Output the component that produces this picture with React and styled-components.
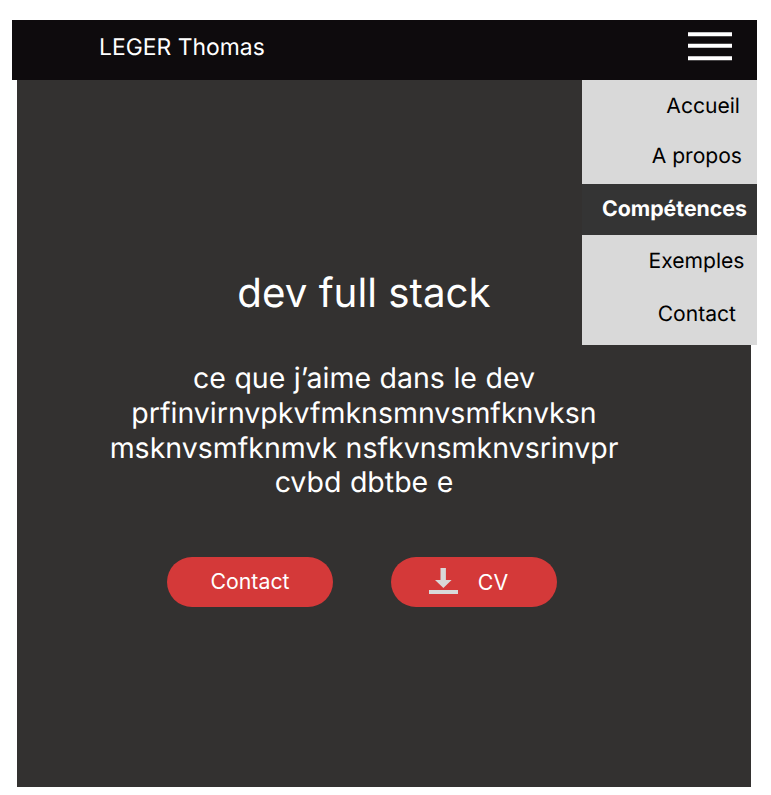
import React from "react";
import styled, { createGlobalStyle } from "styled-components";

const Global = createGlobalStyle`
  * { box-sizing: border-box; }
  body { margin: 0; background: #fff; font-family: Inter, sans-serif; overflow: hidden; text-rendering: geometricPrecision; }
`;
const Page = styled.div`
  position: relative;
  width: 771px;
  height: 795px;
  padding: 20px 14px 8px 12px;
`;
const Header = styled.header`
  display: flex;
  align-items: flex-start;
  justify-content: space-between;
  height: 60px;
  padding: 12px 25px 0 87px;
  background: #0e0b0d;
  color: #fff;
`;
const Brand = styled.div`
  font-size: 22.9px;
  line-height: 28px;
  white-space: nowrap;
  margin-top: 1px;
`;
const MenuIcon = styled.svg`
  display: block;
  width: 44px;
  height: 29px;
`;
const MenuButton = styled.button`
  padding: 0;
  border: 0;
  background: none;
`;
const Hero = styled.main`
  display: flex;
  flex-direction: column;
  align-items: center;
  width: 734px;
  height: 707px;
  margin-left: 5px;
  padding-top: 188px;
  background: #333130;
  color: #fff;
  text-align: center;
`;
const Title = styled.h1`
  margin: 0 40px 0 0;
  font-size: 40.3px;
  font-weight: 400;
  line-height: 50px;
`;
const Text = styled.p`
  margin: 43px 40px 0 0;
  font-size: 28.5px;
  word-spacing: 0.5px;
  line-height: 34.75px;
  white-space: nowrap;
`;
const Actions = styled.div`
  display: flex;
  gap: 57.5px;
  margin: 56.6px 44.5px 0 0;
`;
const Pill = styled.button`
  display: flex;
  align-items: center;
  justify-content: center;
  gap: 20px;
  width: 166px;
  height: 50px;
  padding: 0 ${(p) => p.$shift || 0}px ${(p) => p.$lift || 0}px 0;
  border: 0;
  border-radius: 25px;
  background: #d43939;
  color: #fff;
  font: 400 21.3px/26px Inter, sans-serif;
`;
const DownloadIcon = styled.svg`
  width: 29px;
  height: 26px;
  margin-top: -1px;
`;
const Menu = styled.nav`
  position: absolute;
  top: 80px;
  left: 582.4px;
  width: 174.6px;
  height: 265px;
  background: #d9d9d9;
`;
const MenuItem = styled.a`
  display: flex;
  align-items: center;
  justify-content: flex-end;
  height: ${(p) => p.$h}px;
  padding-top: ${(p) => p.$drop || 0}px;
  padding-right: ${(p) => p.$right}px;
  padding-bottom: ${(p) => p.$lift || 0}px;
  background: ${(p) => (p.$active ? "#343434" : "transparent")};
  color: ${(p) => (p.$active ? "#fff" : "#000")};
  font-size: ${(p) => (p.$active ? 21.3 : 21.1)}px;
  font-weight: ${(p) => (p.$active ? 700 : 400)};
`;

const items = [
  { label: "Accueil", h: 52, right: 17 },
  { label: "A propos", h: 52, right: 15, lift: 3 },
  { label: "Compétences", h: 51, right: 10, lift: 2, active: true },
  { label: "Exemples", h: 51, right: 12.5, drop: 1 },
  { label: "Contact", h: 55, right: 21, drop: 1 },
];

export default function App() {
  return (
    <Page>
      <Global />
      <Header>
        <Brand>LEGER Thomas</Brand>
        <MenuButton aria-label="Menu">
          <MenuIcon viewBox="0 0 44 29" fill="#fff">
            <path d="M0 .2h44v4H0zM0 11.8h44v4H0zM0 24.2h44v4H0z" />
          </MenuIcon>
        </MenuButton>
      </Header>
      <Hero>
        <Title>dev full stack</Title>
        <Text>
          ce que j’aime dans le dev<br />
          prfinvirnvpkvfmknsmnvsmfknvksn<br />
          msknvsmfknmvk nsfkvnsmknvsrinvpr<br />
          cvbd dbtbe e
        </Text>
        <Actions>
          <Pill $lift={2}>Contact</Pill>
          <Pill $shift={10}>
            <DownloadIcon viewBox="0 0 29 26" fill="#d9d9d9">
              <path d="M11.5 0h5.4v12h5.7l-8.2 8-8.4-8h5.5zM0 22h29v4H0z" />
            </DownloadIcon>
            CV
          </Pill>
        </Actions>
      </Hero>
      <Menu>
        {items.map((i) => (
          <MenuItem key={i.label} $h={i.h} $right={i.right} $lift={i.lift} $drop={i.drop} $active={i.active}>{i.label}</MenuItem>
        ))}
      </Menu>
    </Page>
  );
}
